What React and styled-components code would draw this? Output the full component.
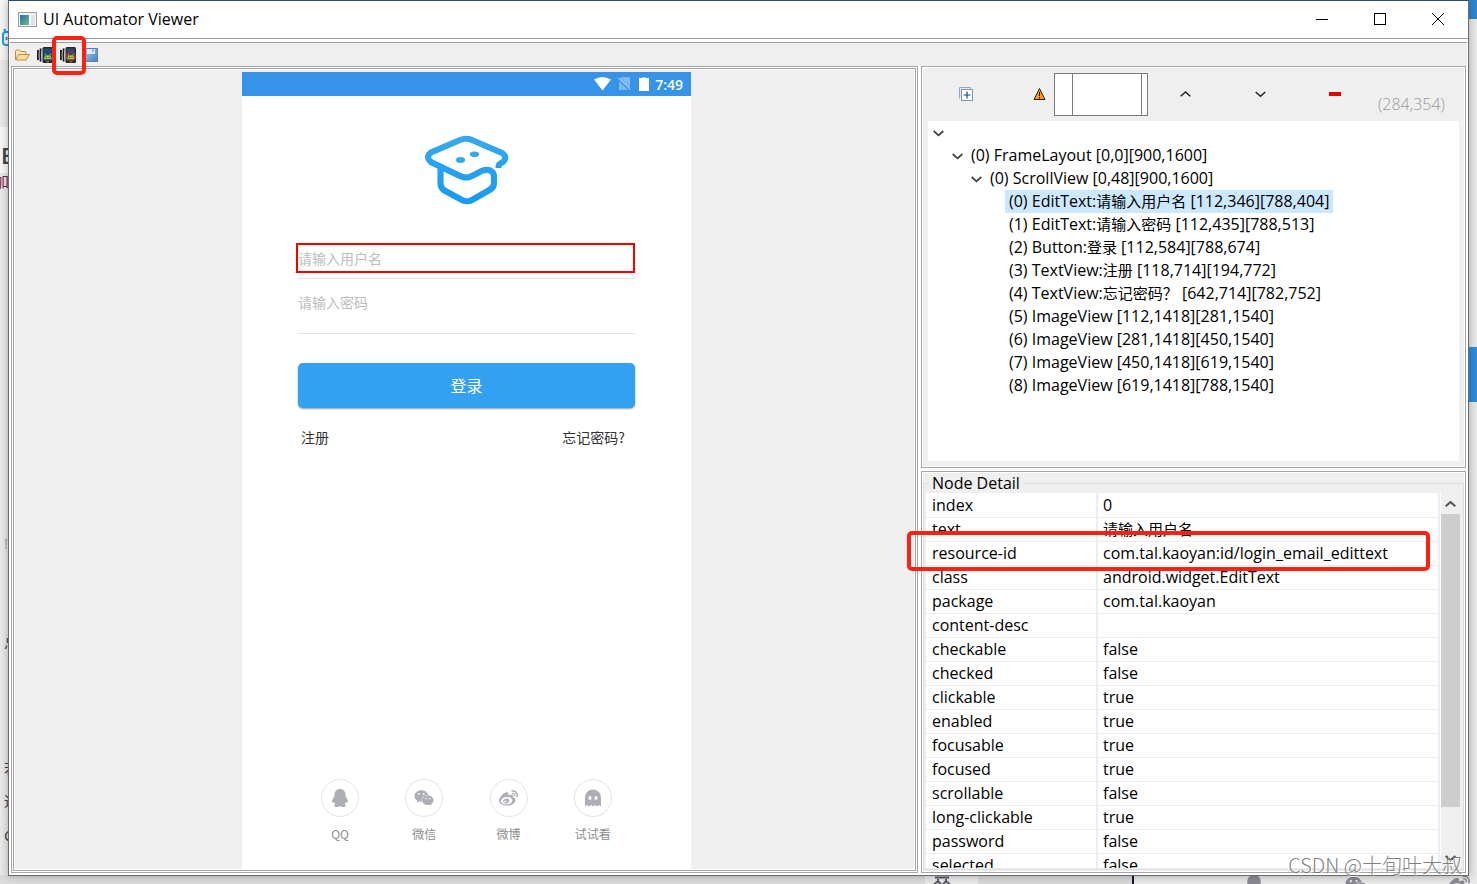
import React from "react";
import styled, { createGlobalStyle, css } from "styled-components";
import { FaWeixin, FaWeibo } from "react-icons/fa";

const uiFont = `"Open Sans", "Noto Sans CJK SC", sans-serif`;
const appFont = `"Noto Sans CJK SC", sans-serif`;

const GlobalStyle = createGlobalStyle`
  *, *::before, *::after { box-sizing: border-box; }
  body { margin: 0; font-family: ${uiFont}; font-size: 16px; color: #000; }
  button { border: 0; padding: 0; background: none; font: inherit; color: inherit; }
  ul { list-style: none; margin: 0; padding: 0; }
`;

const Desktop = styled.div`
  position: relative;
  display: flex;
  height: 100vh;
  min-height: 600px;
  padding: 0 8px 8px;
  overflow: hidden;
  background: #e9e9e9;
`;

/* Page fragments that show around the window */
const Backdrop = styled.div`
  position: absolute;
  inset: 0;
  overflow: hidden;
`;
const Patch = styled.div`
  position: absolute;
  background: ${(p) => p.$color};
  left: ${(p) => p.$left}px;
  top: ${(p) => p.$top}px;
  width: ${(p) => p.$width}px;
  height: ${(p) => p.$height}px;
`;
const RightPatch = styled.div`
  position: absolute;
  right: 0;
  width: 9px;
  background: ${(p) => p.$color};
  top: ${(p) => p.$top}px;
  height: ${(p) => p.$height}px;
`;
const SiteLogo = styled.svg`
  position: absolute;
  top: 27px;
  left: 0;
`;
const Scrap = styled.span`
  position: absolute;
  left: ${(p) => p.$left}px;
  top: ${(p) => p.$top}px;
  font-size: ${(p) => p.$size || 15}px;
  font-weight: ${(p) => (p.$bold ? 600 : 400)};
  line-height: 20px;
  color: ${(p) => p.$color || "#444"};
`;
const BottomGlyph = styled.span`
  position: absolute;
  bottom: ${(p) => p.$drop}px;
  left: ${(p) => p.$left}px;
  line-height: 0;
  color: #8b8c93;
`;
const BottomBar = styled.div`
  position: absolute;
  bottom: 0;
  height: 9px;
  left: ${(p) => p.$left}px;
  width: ${(p) => p.$width}px;
  background: ${(p) => p.$color};
`;

const Window = styled.main`
  position: relative;
  flex: 1;
  min-width: 0;
  display: flex;
  flex-direction: column;
  border: 1px solid #6c6c70;
  border-top-color: #2d4a66;
  background: #fff;
  box-shadow: 0 0 8px rgba(0, 0, 0, 0.3);
`;

const TitleBar = styled.header`
  display: flex;
  align-items: center;
  height: 38px;
  padding: 0 1px 1px 9px;
  border-bottom: 1px solid #9a9a9a;
`;
const Title = styled.h1`
  flex: 1;
  margin: 0 0 0 6px;
  font-size: 16px;
  font-weight: 400;
  line-height: 20px;
`;
const CaptionButton = styled.button`
  display: grid;
  place-items: center;
  width: 58px;
  height: 34px;
`;

const Toolbar = styled.div`
  display: flex;
  align-items: center;
  gap: 7px;
  height: 24px;
  margin: 3px 1px 0;
  padding-left: 4px;
  border-top: 1px solid #a0a0a4;
  background: #efefef;
`;
const ToolButton = styled.button`
  position: relative;
  display: grid;
  place-items: center;
  width: 16px;
  height: 16px;
  ${(p) =>
    p.$marked &&
    css`
      &::after {
        content: "";
        position: absolute;
        inset: -11px -10px -12px -8px;
        border: 4px solid #ff2012;
        border-radius: 5px;
        z-index: 2;
      }
    `}
`;

const Panes = styled.div`
  flex: 1;
  min-height: 0;
  display: grid;
  grid-template-columns: minmax(0, 907fr) minmax(0, 545fr);
  gap: 3px;
  padding: 0 2px 2px;
`;
const Pane = styled.section`
  display: flex;
  flex-direction: column;
  min-height: 0;
  min-width: 0;
  border: 1px solid #a5a5ab;
  background: #efefef;
  box-shadow: inset 0 0 0 1px #fff;
`;
const ScreenPane = styled(Pane)`
  padding: 1px;
  background: #fff;
`;
const ScreenArea = styled.div`
  flex: 1;
  min-height: 0;
  display: flex;
  justify-content: center;
  padding: 3px 0 0 4px;
  border: 1px solid #a5a5ab;
  box-shadow: inset 0 0 0 1px #fff;
  background: #efefef;
`;
const SidePanes = styled.div`
  display: grid;
  grid-template-rows: minmax(0, 402fr) minmax(0, 402fr);
  gap: 3px;
  min-height: 0;
`;

const Phone = styled.div`
  display: flex;
  flex-direction: column;
  width: 449px;
  overflow: hidden;
  background: #fff;
  font-family: ${appFont};
`;
const StatusBar = styled.div`
  display: flex;
  flex: none;
  align-items: center;
  justify-content: flex-end;
  height: 24px;
  padding-right: 8px;
  background: #3693e8;
  color: #fff;
  font-family: "Open Sans", sans-serif;
  font-size: 14px;
  font-weight: 600;
`;
const StatusIcons = styled.svg`
  margin-right: 5px;
`;
const Logo = styled.svg`
  flex: none;
  align-self: center;
  margin-top: 39px;
`;
const LoginForm = styled.form`
  display: flex;
  flex-direction: column;
  margin: 38px 56px 0;
`;
const Field = styled.div`
  height: ${(p) => p.$height}px;
  padding-top: ${(p) => p.$inset || 0}px;
  border-bottom: 1px solid #e4e4e4;
`;
const FieldInput = styled.input`
  display: block;
  width: calc(100% + 2px);
  height: 30px;
  margin-left: -2px;
  padding: 0;
  border: 2px solid ${(p) => (p.$marked ? "#f50000" : "transparent")};
  outline: 0;
  background: transparent;
  font-family: ${appFont};
  font-size: 14px;
  &::placeholder {
    color: #bdbdbd;
    opacity: 1;
  }
`;
const LoginButton = styled.button`
  height: 45px;
  margin-top: 29px;
  padding-bottom: 2px;
  border-radius: 5px;
  background: #33a0f1;
  box-shadow: 0 1px 2px rgba(0, 0, 0, 0.4);
  color: #fff;
  font-size: 16px;
`;
const FormLinks = styled.div`
  display: flex;
  justify-content: space-between;
  margin-top: 19px;
  padding: 0 10px 0 3px;
`;
const AppLink = styled.a`
  color: #333;
  font-size: 14px;
  line-height: 20px;
  text-decoration: none;
`;
const SocialRow = styled.div`
  display: grid;
  grid-template-columns: repeat(4, 1fr);
  flex: none;
  margin: auto 56px 27px;
`;
const SocialButton = styled.button`
  display: flex;
  flex-direction: column;
  align-items: center;
  gap: 8px;
  color: #8c8c8c;
  font-size: 12px;
  line-height: 18px;
`;
const Round = styled.span`
  display: grid;
  place-items: center;
  width: 38px;
  height: 38px;
  border: 1px solid #e2e2e2;
  border-radius: 50%;
  color: #adafb6;
`;

const TreeTools = styled.div`
  display: flex;
  align-items: center;
  flex: none;
  height: 54px;
  padding-left: 6px;
`;
const TreeButton = styled.button`
  display: grid;
  place-items: center;
  width: 75px;
  height: 42px;
`;
const WarningSlot = styled.span`
  display: flex;
  justify-content: flex-end;
  width: 51px;
  padding-right: 8px;
`;
const SearchBox = styled.div`
  width: 94px;
  height: 43px;
  padding: 0 5px 0 17px;
  border: 1px solid #7a7a7a;
  background: #fff;
`;
const SearchInput = styled.input`
  display: block;
  width: 100%;
  height: 100%;
  padding: 0 4px;
  border: solid #7a7a7a;
  border-width: 0 1px;
  outline: 0;
  font: inherit;
`;
const Coordinates = styled.output`
  align-self: flex-end;
  margin: 0 0 6px 5px;
  color: #999;
  font-weight: 300;
  line-height: 22px;
`;
const Tree = styled.ul`
  flex: 1;
  min-height: 0;
  margin: 0 6px 6px 6px;
  overflow: hidden;
  background: #fff;
`;
const TreeRow = styled.li`
  display: flex;
  align-items: center;
  height: 23px;
  padding-left: ${(p) => p.$level * 19 + (p.$leaf ? 20 : 5)}px;
  white-space: nowrap;
`;
const Toggle = styled.button`
  display: grid;
  place-items: center;
  width: 11px;
  height: 12px;
  margin-right: 4px;
`;
const NodeLabel = styled.span`
  padding: 0 4px;
  line-height: 23px;
  background: ${(p) => (p.$selected ? "#cce8ff" : "transparent")};
`;
const Han = styled.span`
  font-size: 15px;
`;

const DetailPane = styled(Pane)`
  position: relative;
  padding: 1px 1px 2px 1px;
`;
const DetailGroup = styled.fieldset`
  flex: 1;
  display: flex;
  min-width: 0;
  min-height: 0;
  margin: 0;
  padding: 0 2px 1px;
  border: 1px solid #dcdcdc;
`;
const DetailLegend = styled.legend`
  margin-left: 2px;
  padding: 0 3px 0 4px;
  line-height: 20px;
`;
const TableView = styled.div`
  flex: 1;
  min-width: 0;
  overflow: hidden;
  background: #fff;
`;
const DetailTable = styled.table`
  width: 100%;
  table-layout: fixed;
  border-collapse: collapse;
`;
const Cell = styled.td`
  height: 24px;
  padding: 0 5px;
  border-right: 2px solid #e8eef8;
  border-bottom: 1px solid #ececec;
  line-height: 22px;
  text-align: left;
  font-weight: 400;
  white-space: nowrap;
`;
const NameCell = styled(Cell)`
  width: 171px;
  padding-left: 6px;
`;
const ScrollBar = styled.div`
  display: flex;
  flex-direction: column;
  width: 21px;
  border-left: 1px solid #fff;
`;
const ScrollButton = styled.button`
  display: grid;
  place-items: center;
  flex: none;
  width: 19px;
  height: 21px;
`;
const ScrollTrack = styled.div`
  flex: 1;
  min-height: 0;
`;
const ScrollThumb = styled.div`
  width: 19px;
  height: 88%;
  background: #cdcdcd;
`;
const RowMark = styled.div`
  position: absolute;
  top: 59px;
  left: -15px;
  right: 35px;
  height: 40px;
  border: 4px solid #ff2012;
  border-radius: 5px;
  pointer-events: none;
`;
const Watermark = styled.div`
  position: absolute;
  right: 15px;
  bottom: 5px;
  color: rgba(105, 105, 105, 0.85);
  font-family: ${appFont};
  font-size: 20px;
  font-weight: 300;
  line-height: 28px;
  text-shadow: 1px 1px 0 rgba(255, 255, 255, 0.7);
  white-space: nowrap;
`;

const treeNodes = [
  { level: 0, text: "", open: true },
  { level: 1, text: "(0) FrameLayout [0,0][900,1600]", open: true },
  { level: 2, text: "(0) ScrollView [0,48][900,1600]", open: true },
  { level: 3, text: "(0) EditText:请输入用户名 [112,346][788,404]", selected: true },
  { level: 3, text: "(1) EditText:请输入密码 [112,435][788,513]" },
  { level: 3, text: "(2) Button:登录 [112,584][788,674]" },
  { level: 3, text: "(3) TextView:注册 [118,714][194,772]" },
  { level: 3, text: "(4) TextView:忘记密码？ [642,714][782,752]" },
  { level: 3, text: "(5) ImageView [112,1418][281,1540]" },
  { level: 3, text: "(6) ImageView [281,1418][450,1540]" },
  { level: 3, text: "(7) ImageView [450,1418][619,1540]" },
  { level: 3, text: "(8) ImageView [619,1418][788,1540]" },
];

const details = [
  ["index", "0"],
  ["text", "请输入用户名"],
  ["resource-id", "com.tal.kaoyan:id/login_email_edittext"],
  ["class", "android.widget.EditText"],
  ["package", "com.tal.kaoyan"],
  ["content-desc", ""],
  ["checkable", "false"],
  ["checked", "false"],
  ["clickable", "true"],
  ["enabled", "true"],
  ["focusable", "true"],
  ["focused", "true"],
  ["scrollable", "false"],
  ["long-clickable", "true"],
  ["password", "false"],
  ["selected", "false"],
];

/* Chinese runs are set one size smaller than the Latin text around them */
const MixedText = ({ children }) =>
  children
    .split(/([\u4e00-\u9fff\uff00-\uffef]+)/)
    .map((part, i) => (i % 2 ? <Han key={i}>{part}</Han> : part));

const Chevron = ({ up, color = "#222", width = 2 }) => (
  <svg width="11" height="8" viewBox="0 0 11 8" fill="none" stroke={color} strokeWidth={width}>
    <path d={up ? "M.7 6.300 5.500 2l4.800 4.300" : "M.7 2l4.800 4.300L10.300 2"} />
  </svg>
);

const FolderIcon = () => (
  <svg width="16" height="16" viewBox="0 0 16 16" stroke="#c08a45" strokeLinejoin="round">
    <path d="M1.500 12.500V4l1-1h3l1 1.500h5l.5 1V8" fill="#fbe7b2" />
    <path d="M1.500 13 4.500 7.500h11l-3.500 5.500z" fill="#fbdc98" />
  </svg>
);

const DeviceIcon = ({ stop }) => (
  <svg width="16" height="16" viewBox="0 0 16 16">
    <path d="M1.200 3Q.4 8 1.200 13M3.800 1.500Q2.600 8 3.800 14.500" fill="none" stroke="#1c1c1c" strokeWidth="2" />
    <path d="M2.500 2.500Q1.700 8 2.500 13.500M5 1Q4.200 8 5 15" fill="none" stroke="#c4c8cc" strokeWidth=".7" />
    <rect x="5.500" y="0" width="10.500" height="16" rx="1.500" fill="#262626" />
    <rect x="6.500" y="1.500" width="8.500" height="12" fill="#1f4d73" />
    <path d="M7 12.200a3.800 4 0 0 1 7.600 0z" fill="#a4c639" />
    <path d="M7.800 6.800l1.400 2M13.800 6.800l-1.400 2" stroke="#a4c639" />
    <path d="M9 10.500h1M11.600 10.500h1" stroke="#1f4d73" />
    <path d="M9.500 14.700h2.500" stroke="#999" />
    {stop && <circle cx="10.800" cy="9.700" r="4.500" fill="none" stroke="#d81b1b" strokeWidth="1.200" />}
  </svg>
);

const SaveIcon = () => (
  <svg width="16" height="16" viewBox="0 0 16 16">
    <defs>
      <linearGradient id="disk" x1="0" y1="0" x2="1" y2="1">
        <stop offset="0" stopColor="#a9cbef" />
        <stop offset="1" stopColor="#3f7fc6" />
      </linearGradient>
    </defs>
    <rect x="1.500" y="1.500" width="13" height="13" fill="url(#disk)" stroke="#5584bd" />
    <rect x="4" y="2" width="8" height="5" fill="#dcebfa" />
    <rect x="9" y="2" width="2" height="3" fill="#8fb8e4" />
  </svg>
);

const AppIcon = () => (
  <svg width="19" height="15" viewBox="0 0 19 15">
    <defs>
      <linearGradient id="pane" x1="0" y1="0" x2="1" y2="1">
        <stop offset="0" stopColor="#2e68a8" />
        <stop offset="1" stopColor="#70c080" />
      </linearGradient>
    </defs>
    <rect x=".5" y=".5" width="18" height="14" fill="#f2f4f6" stroke="#9a9fa5" />
    <rect x="2" y="3" width="9" height="10" fill="url(#pane)" />
    <rect x="13" y="3" width="4" height="10" fill="#dfe3e7" />
  </svg>
);

const PhoneLogo = () => (
  <Logo width="84" height="70" viewBox="0 0 84 70" fill="none" strokeWidth="6.200" strokeLinecap="butt">
    <defs>
      <linearGradient id="cap" x1="0" y1="0" x2="0" y2="1">
        <stop offset="0" stopColor="#36a8ee" />
        <stop offset="1" stopColor="#189bf0" />
      </linearGradient>
    </defs>
    <path
      stroke="url(#cap)"
      d="M15.500 32V48Q15.500 53 19.500 55.500L37 65Q42 67.500 47 65L64.500 55Q69 52.500 69 48V42C69 35 62.500 33.500 56.500 36L47 41Q41 44 35 41L6 27Q0 22 6 17.500L35 5Q41 2.500 47 5L77 18Q83 22 78 27C73.500 29 73.500 30 73.500 33"
    />
    <ellipse cx="35.500" cy="25" rx="4.600" ry="3" fill="#36a8ee" />
    <ellipse cx="49.500" cy="19.300" rx="4.600" ry="2.800" fill="#36a8ee" />
  </Logo>
);

const GhostIcon = () => (
  <svg width="18" height="18" viewBox="0 0 18 18">
    <path
      fill="currentColor"
      fillRule="evenodd"
      d="M1 17.500V8.500a8 8 0 0 1 16 0v9l-2-1.500-2 1.500-2-1.500-2 1.500-2-1.500-2 1.500-2-1.500zM6 7a1.600 1.900 0 1 0 0 3.800A1.600 1.900 0 0 0 6 7zm6 0a1.600 1.900 0 1 0 0 3.800A1.600 1.900 0 0 0 12 7z"
    />
  </svg>
);

const PenguinIcon = ({ size = 18 }) => (
  <svg width={size} height={size} viewBox="0 0 18 18" fill="currentColor">
    <path d="M9 0C5.500 0 3.500 2.500 3.500 5.500V7C2.200 9 1 11 1 12.600c0 1.600.9 1.300 1.900.1.200 1 .7 1.900 1.500 2.700-1.600.5-1.700 2.600 1 2.600 1.700 0 2.900-.4 3.600-1 .7.600 1.900 1 3.600 1 2.700 0 2.600-2.100 1-2.600.8-.8 1.300-1.700 1.500-2.700 1 1.200 1.900 1.500 1.900-.1C17 11 15.800 9 14.500 7V5.500C14.500 2.500 12.500 0 9 0z" />
  </svg>
);

const socials = [
  ["QQ", <PenguinIcon />],
  ["微信", <FaWeixin size={20} />],
  ["微博", <FaWeibo size={19} />],
  ["试试看", <GhostIcon />],
];

const PhoneScreen = () => (
  <Phone>
    <StatusBar>
      <StatusIcons width="56" height="16" viewBox="0 0 56 16">
        <path d="M0 3.500Q8.500-1.500 17 3.500L8.500 14.500z" fill="#fff" />
        <path d="M28 1h8v12L25 3z M25 5v9h9z" fill="#fff" opacity=".35" />
        <path d="M24 1.500 36.500 14" stroke="#fff" opacity=".5" />
        <path d="M45 2h10v13H45z" fill="#fff" />
        <path d="M48 1h4v1h-4z" fill="#fff" opacity=".5" />
      </StatusIcons>
      7:49
    </StatusBar>
    <PhoneLogo />
    <LoginForm onSubmit={(e) => e.preventDefault()}>
      <Field $height={36}>
        <FieldInput $marked aria-label="请输入用户名" placeholder="请输入用户名" />
      </Field>
      <Field $height={55} $inset={8}>
        <FieldInput type="password" aria-label="请输入密码" placeholder="请输入密码" />
      </Field>
      <LoginButton type="submit">登录</LoginButton>
      <FormLinks>
        <AppLink href="#register">注册</AppLink>
        <AppLink href="#forgot">忘记密码?</AppLink>
      </FormLinks>
    </LoginForm>
    <SocialRow>
      {socials.map(([name, icon]) => (
        <SocialButton key={name} type="button">
          <Round>{icon}</Round>
          {name}
        </SocialButton>
      ))}
    </SocialRow>
  </Phone>
);

export default function App() {
  return (
    <>
      <GlobalStyle />
      <Desktop>
        <Backdrop aria-hidden="true">
          <Patch $left={0} $top={0} $width={9} $height={60} $color="#f6f6f6" />
          <Patch $left={0} $top={127} $width={9} $height={46} $color="#f8f8f8" />
          <SiteLogo width="9" height="22" viewBox="0 0 9 22" fill="none" stroke="#1fa2cf" strokeWidth="2">
            <path d="M9 5H6Q3 5 3 8v7q0 3 3 3h3M4 2l2 3M6.500 10v3" />
          </SiteLogo>
          <Scrap $left={1} $top={145} $size={22} $bold>E</Scrap>
          <Scrap $left={-6} $top={171} $color="#7a2240">加</Scrap>
          <Scrap $left={4} $top={533} $color="#b0a0a0">!</Scrap>
          <Scrap $left={4} $top={632}>总</Scrap>
          <Scrap $left={4} $top={758}>若</Scrap>
          <Scrap $left={4} $top={791}>通</Scrap>
          <Scrap $left={4} $top={825}>C</Scrap>
          <RightPatch $top={0} $height={19} $color="#2f86d2" />
          <RightPatch $top={347} $height={55} $color="#2f8ddb" />
          <BottomBar $left={0} $width={925} $color="#dcdcdc" />
          <BottomBar $left={978} $width={154} $color="#d8d8d8" />
          <BottomBar $left={1132} $width={2} $color="#15152c" />
          <BottomGlyph $left={933} $drop={-1}>
            <svg width="18" height="9" viewBox="0 0 18 9" fill="none" stroke="#5c5b66" strokeWidth="2">
              <path d="M2 1.500h14M5 3v3M13 3v3M1 8.500 5 5l3 3.500M10 8.500 13 5l4 3.500" />
            </svg>
          </BottomGlyph>
          <BottomGlyph $left={1243} $drop={-13}><PenguinIcon size={22} /></BottomGlyph>
          <BottomGlyph $left={1345} $drop={-14}><FaWeixin size={24} /></BottomGlyph>
          <BottomGlyph $left={1448} $drop={-12}><FaWeibo size={22} /></BottomGlyph>
        </Backdrop>
        <Window>
          <TitleBar>
            <AppIcon />
            <Title>UI Automator Viewer</Title>
            <CaptionButton aria-label="Minimize">
              <svg width="12" height="12" viewBox="0 0 12 12" stroke="#000"><path d="M0 6.500h12" /></svg>
            </CaptionButton>
            <CaptionButton aria-label="Maximize">
              <svg width="12" height="12" viewBox="0 0 12 12" stroke="#000" fill="none"><rect x=".5" y=".5" width="11" height="11" /></svg>
            </CaptionButton>
            <CaptionButton aria-label="Close">
              <svg width="12" height="12" viewBox="0 0 12 12" stroke="#000"><path d="M0 0l12 12M12 0 0 12" /></svg>
            </CaptionButton>
          </TitleBar>
          <Toolbar>
            <ToolButton aria-label="Open"><FolderIcon /></ToolButton>
            <ToolButton aria-label="Device screenshot"><DeviceIcon /></ToolButton>
            <ToolButton aria-label="Device screenshot, compressed hierarchy" $marked><DeviceIcon stop /></ToolButton>
            <ToolButton aria-label="Save"><SaveIcon /></ToolButton>
          </Toolbar>
          <Panes>
            <ScreenPane>
              <ScreenArea>
                <PhoneScreen />
              </ScreenArea>
            </ScreenPane>
            <SidePanes>
              <Pane>
                <TreeTools>
                  <TreeButton aria-label="Expand all">
                    <svg width="14" height="14" viewBox="0 0 14 14" fill="#fff">
                      <path d="M.5 11.500V.5h11v2" fill="#e3edf7" stroke="#8fa9c4" />
                      <rect x="2.500" y="2.500" width="11" height="11" stroke="#7d93b0" />
                      <path d="M4.500 8h7M8 4.500v7" stroke="#124a86" strokeWidth="1.200" />
                    </svg>
                  </TreeButton>
                  <WarningSlot>
                    <svg width="13" height="14" viewBox="0 0 13 14">
                      <path d="M6.500 1.500 12 12.500H1z" fill="#f90" stroke="#222" />
                      <path d="M6.500 5v4M6.500 10v1.500" stroke="#000" />
                    </svg>
                  </WarningSlot>
                  <SearchBox><SearchInput aria-label="Search nodes" /></SearchBox>
                  <TreeButton aria-label="Previous"><Chevron up width={1.5} /></TreeButton>
                  <TreeButton aria-label="Next"><Chevron width={1.5} /></TreeButton>
                  <TreeButton aria-label="Clear">
                    <svg width="13" height="4" viewBox="0 0 13 4"><path d="M0 0h12v4H0z" fill="#e60000" /></svg>
                  </TreeButton>
                  <Coordinates>(284,354)</Coordinates>
                </TreeTools>
                <Tree>
                  {treeNodes.map((n, i) => (
                    <TreeRow key={i} $level={n.level} $leaf={!n.open}>
                      {n.open && <Toggle aria-label="Collapse"><Chevron color="#404040" width={1.7} /></Toggle>}
                      <NodeLabel $selected={n.selected}>
                        <MixedText>{n.text}</MixedText>
                      </NodeLabel>
                    </TreeRow>
                  ))}
                </Tree>
              </Pane>
              <DetailPane>
                <DetailGroup>
                  <DetailLegend>Node Detail</DetailLegend>
                  <TableView>
                    <DetailTable>
                      <tbody>
                        {details.map(([name, value]) => (
                          <tr key={name}>
                            <NameCell as="th" scope="row">{name}</NameCell>
                            <Cell><MixedText>{value}</MixedText></Cell>
                          </tr>
                        ))}
                      </tbody>
                    </DetailTable>
                  </TableView>
                  <ScrollBar>
                    <ScrollButton aria-label="Scroll up"><Chevron up color="#505050" /></ScrollButton>
                    <ScrollTrack><ScrollThumb /></ScrollTrack>
                    <ScrollButton aria-label="Scroll down"><Chevron color="#505050" /></ScrollButton>
                  </ScrollBar>
                </DetailGroup>
                <RowMark />
              </DetailPane>
            </SidePanes>
          </Panes>
        </Window>
        <Watermark>CSDN @十旬叶大叔</Watermark>
      </Desktop>
    </>
  );
}
